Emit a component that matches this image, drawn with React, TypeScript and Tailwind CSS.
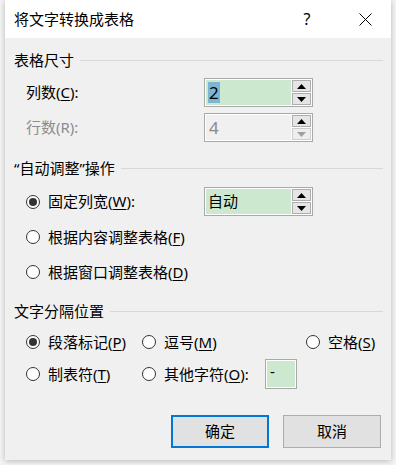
import React from "react";

const FONT = "font-['Noto_Sans','Noto_Sans_CJK_SC',sans-serif]";

function Mn({ k }: { k: string }) {
  return <span className="underline underline-offset-2 decoration-1">{k}</span>;
}

function Radio({ checked = false }: { checked?: boolean }) {
  return (
    <span className="w-[14px] h-[14px] rounded-full border border-[#333] bg-white flex items-center justify-center shrink-0">
      {checked && <span className="w-[8px] h-[8px] rounded-full bg-[#333]" />}
    </span>
  );
}

function Arrow({ up, disabled }: { up?: boolean; disabled?: boolean }) {
  return (
    <svg width="9" height="5" viewBox="0 0 9 5">
      <path
        d={up ? "M0 5 L4.5 0 L9 5 Z" : "M0 0 L4.5 5 L9 0 Z"}
        fill={disabled ? "#a0a0a0" : "#000"}
      />
    </svg>
  );
}

function Spinner({
  children,
  disabled,
}: {
  children: React.ReactNode;
  disabled?: boolean;
}) {
  return (
    <div className="w-[109px] h-[29px] border border-[#a9a9a9] bg-white flex p-[1px]">
      <div
        className={`flex-1 flex items-center pl-[2px] text-[15px] ${
          disabled ? "bg-[#f0f0f0] text-[#8a8a8a]" : "bg-[#cce8cf] text-black"
        }`}
      >
        {children}
      </div>
      <div className="w-[20px] flex flex-col gap-[1px] pl-[1px]">
        <div className="flex-1 border border-[#adadad] bg-[#e5e5e5] flex items-center justify-center">
          <Arrow up />
        </div>
        <div
          className={`flex-1 border flex items-center justify-center ${
            disabled ? "border-[#cccccc] bg-[#eeeeee]" : "border-[#adadad] bg-[#e5e5e5]"
          }`}
        >
          <Arrow disabled={disabled} />
        </div>
      </div>
    </div>
  );
}

function Header({ title, className }: { title: string; className: string }) {
  return (
    <div className={`h-[20px] flex items-center gap-[6px] pr-[8px] ${className}`}>
      <span className="text-[15px] text-black whitespace-nowrap">{title}</span>
      <div className="flex-1 h-px bg-[#d8d8d8]" />
    </div>
  );
}

export default function App() {
  return (
    <div className={`w-[396px] h-[465px] bg-[#f4f4f4] pl-[5px] ${FONT}`}>
      <div className="w-[386px] h-[460px] flex flex-col shadow-[0_1px_6px_rgba(0,0,0,0.25)]">
        <div className="h-[38px] bg-white flex items-center pl-[9px] shrink-0">
          <span className="text-[15px] text-black">将文字转换成表格</span>
          <span className="ml-auto w-[16px] text-center text-[16px] text-black mr-[44px]">?</span>
          <svg width="13" height="13" viewBox="0 0 13 13" className="mr-[19px]">
            <path d="M0.5 0.5 L12.5 12.5 M12.5 0.5 L0.5 12.5" stroke="#000" strokeWidth="1" />
          </svg>
        </div>

        <div className="flex-1 bg-[#f0f0f0] pl-[9px] flex flex-col text-[15px] text-black">
          <Header title="表格尺寸" className="mt-[12px]" />
          <div className="mt-[8px] h-[29px] flex items-center pl-[12px]">
            <span className="w-[178px]">
              列数(<Mn k="C" />):
            </span>
            <Spinner>
              <span className="bg-[#7cb6d3] text-[17px] leading-[21px] px-px">2</span>
            </Spinner>
          </div>
          <div className="mt-[6px] h-[29px] flex items-center pl-[12px]">
            <span className="w-[178px] text-[#8d8d8d]">行数(R):</span>
            <Spinner disabled>
              <span className="text-[17px] px-px">4</span>
            </Spinner>
          </div>

          <Header title="“自动调整”操作" className="mt-[16px]" />
          <div className="mt-[9px] h-[29px] flex items-center pl-[12px]">
            <div className="w-[178px] flex items-center gap-[8px]">
              <Radio checked />
              <span>
                固定列宽(<Mn k="W" />):
              </span>
            </div>
            <Spinner>自动</Spinner>
          </div>
          <div className="mt-[9px] h-[24px] flex items-center gap-[8px] pl-[12px]">
            <Radio />
            <span>
              根据内容调整表格(<Mn k="F" />)
            </span>
          </div>
          <div className="mt-[11px] h-[24px] flex items-center gap-[8px] pl-[12px]">
            <Radio />
            <span>
              根据窗口调整表格(<Mn k="D" />)
            </span>
          </div>

          <Header title="文字分隔位置" className="mt-[17px]" />
          <div className="mt-[9px] h-[24px] flex items-center pl-[12px]">
            <div className="w-[116px] flex items-center gap-[8px]">
              <Radio checked />
              <span>
                段落标记(<Mn k="P" />)
              </span>
            </div>
            <div className="w-[164px] flex items-center gap-[8px]">
              <Radio />
              <span>
                逗号(<Mn k="M" />)
              </span>
            </div>
            <div className="flex items-center gap-[8px]">
              <Radio />
              <span>
                空格(<Mn k="S" />)
              </span>
            </div>
          </div>
          <div className="mt-[5px] h-[30px] flex items-center pl-[12px]">
            <div className="w-[116px] flex items-center gap-[8px]">
              <Radio />
              <span>
                制表符(<Mn k="T" />)
              </span>
            </div>
            <div className="w-[123px] flex items-center gap-[8px]">
              <Radio />
              <span>
                其他字符(<Mn k="O" />):
              </span>
            </div>
            <div className="w-[32px] h-[30px] border border-[#a9a9a9] bg-white p-[1px]">
              <div className="w-full h-full bg-[#cce8cf] pl-[3px] leading-[20px]">-</div>
            </div>
          </div>

          <div className="mt-[26px] h-[33px] flex items-center pl-[157px] gap-[14px]">
            <button className="w-[98px] h-[33px] border-2 border-[#0078d7] bg-[#e1e1e1] text-[15px] text-black">
              确定
            </button>
            <button className="w-[98px] h-[33px] border border-[#adadad] bg-[#e1e1e1] text-[15px] text-black">
              取消
            </button>
          </div>
        </div>
      </div>
    </div>
  );
}
